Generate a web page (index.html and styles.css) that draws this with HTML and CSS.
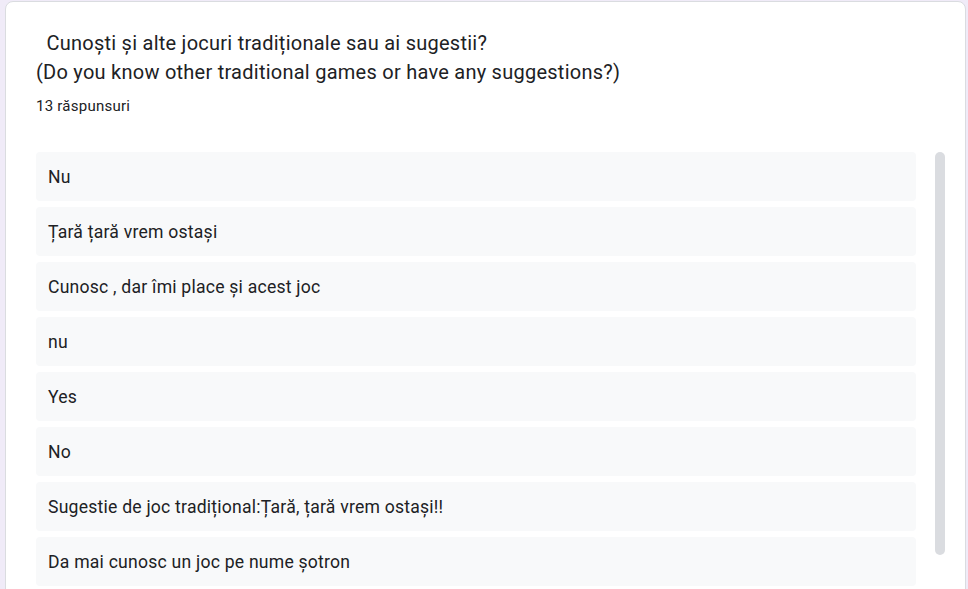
FILE: index.html
```html
<!DOCTYPE html>
<html lang="ro">
<head>
<meta charset="utf-8">
<title>Răspunsuri</title>
<link rel="stylesheet" href="styles.css">
</head>
<body>
<div class="page">
  <section class="card">
    <h2 class="title">  Cunoști și alte jocuri tradiționale sau ai sugestii?
(Do you know other traditional games or have any suggestions?)</h2>
    <div class="count">13 răspunsuri</div>
    <div class="list-wrap">
      <ul class="list">
        <li class="item">Nu</li>
        <li class="item">Țară țară vrem ostași</li>
        <li class="item">Cunosc , dar îmi place și acest joc</li>
        <li class="item">nu</li>
        <li class="item">Yes</li>
        <li class="item">No</li>
        <li class="item">Sugestie de joc tradițional:Țară, țară vrem ostași!!</li>
        <li class="item">Da mai cunosc un joc pe nume șotron</li>
      </ul>
      <div class="scrollbar"><div class="thumb"></div></div>
    </div>
  </section>
</div>
</body>
</html>
```
FILE: styles.css
```css
html, body {
  margin: 0;
  padding: 0;
  background: #f0ebf8;
  height: 589px;
  overflow: hidden;
}
body {
  font-family: Roboto, "Liberation Sans", Arial, sans-serif;
  color: #202124;
}
.page {
  padding: 1px 2px 0 5px;
}
.card {
  background: #fff;
  border: 1px solid #dadce0;
  border-radius: 8px;
  padding: 27px 0 0 30px;
  height: 700px;
  box-sizing: border-box;
}
.title {
  margin: 0;
  font-size: 20px;
  font-weight: 400;
  line-height: 29px;
  white-space: pre-wrap;
  letter-spacing: 0.25px;
}
.count {
  margin-top: 9px;
  font-size: 15px;
  line-height: 20px;
  letter-spacing: 0.25px;
}
.list-wrap {
  display: flex;
  margin-top: 36px;
  gap: 19px;
}
.list {
  list-style: none;
  margin: 0;
  padding: 0;
  width: 880px;
  display: flex;
  flex-direction: column;
  gap: 6px;
}
.item {
  background: #f8f9fa;
  border-radius: 4px;
  height: 49px;
  box-sizing: border-box;
  padding: 1px 12px 0;
  display: flex;
  align-items: center;
  font-size: 17.6px;
  letter-spacing: 0.22px;
}
.scrollbar {
  width: 10px;
}
.thumb {
  width: 10px;
  height: 403px;
  background: #dadce0;
  border-radius: 5px;
}
```
